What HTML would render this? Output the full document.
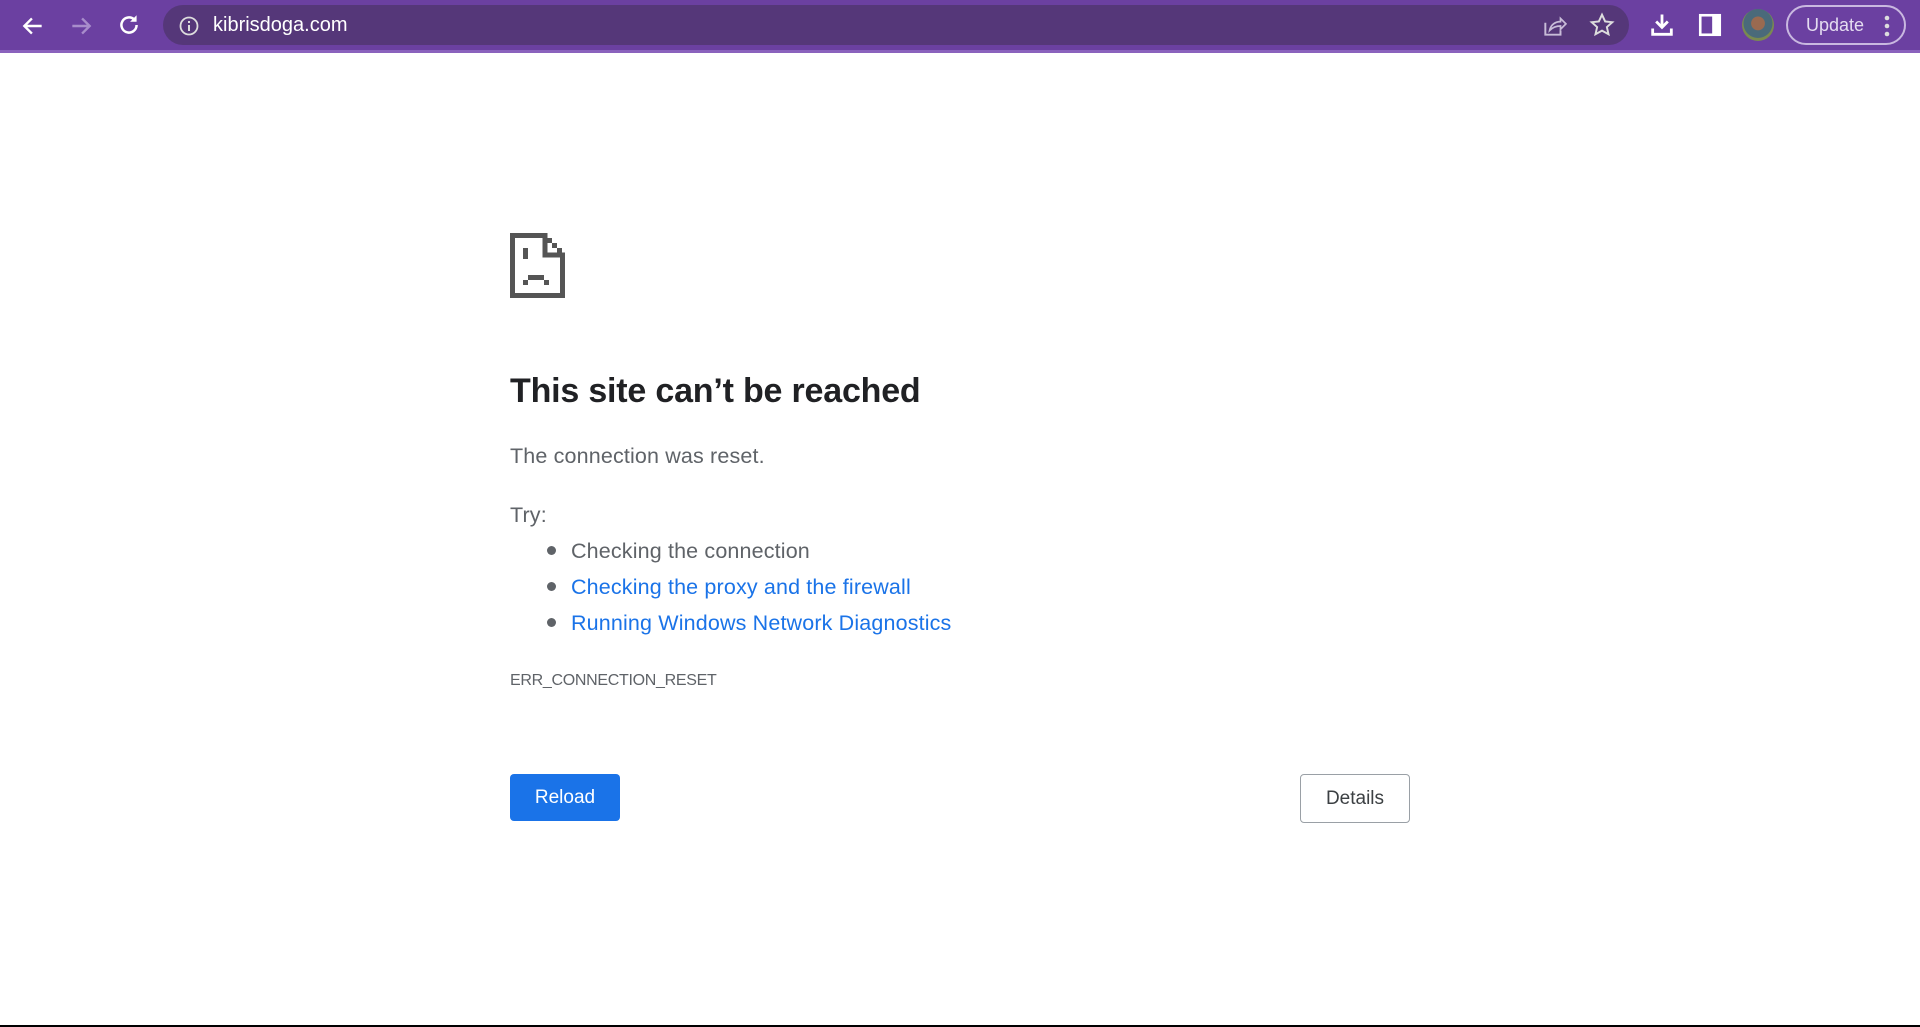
<!DOCTYPE html>
<html><head><meta charset="utf-8"><style>
*{margin:0;padding:0;box-sizing:border-box}
html,body{width:1920px;height:1027px;overflow:hidden;background:#fff;font-family:"Liberation Sans",sans-serif}
#bar{position:absolute;left:0;top:0;width:1920px;height:53px;background:#6b40a1;border-bottom:3px solid #8a62bd}
#omni{position:absolute;left:163px;top:5px;width:1466px;height:40px;border-radius:20px;background:#553779}
#url{position:absolute;left:213px;top:14px;color:#fff;font-size:20px}
.ic{position:absolute}
#upd{position:absolute;left:1786px;top:5px;width:120px;height:40px;border:2px solid #c9b8e0;border-radius:20px;color:#e4dcf0;font-size:18px;line-height:36px;padding-left:18px}
#av{position:absolute;left:1742px;top:9px;width:32px;height:32px;border-radius:50%;background:radial-gradient(circle at 50% 45%,#9a6a50 0 28%,#4a6a7a 30% 60%,#7a8a50 62%)}
h1{position:absolute;left:510px;top:372px;font-size:34px;font-weight:bold;color:#202124;white-space:nowrap;letter-spacing:-0.2px}
.t{position:absolute;color:#5f6368;font-size:21.5px;white-space:nowrap;letter-spacing:0.15px}
.l{color:#1a73e8}
.dot{position:absolute;left:547px;width:9px;height:9px;border-radius:50%;background:#5f6368}
#err{position:absolute;left:510px;top:672px;font-size:16px;color:#5f6368;letter-spacing:-0.3px}
#reload{position:absolute;left:510px;top:774px;width:110px;height:47px;background:#1a73e8;border-radius:4px;color:#fff;font-size:19px;text-align:center;line-height:47px}
#det{position:absolute;left:1300px;top:774px;width:110px;height:49px;border:1px solid #9aa0a6;border-radius:4px;color:#3c4043;font-size:19px;text-align:center;line-height:47px}
#bot{position:absolute;left:0;top:1025px;width:1920px;height:2px;background:#000}
</style></head><body>
<div id="bar"></div>
<svg class="ic" style="left:20px;top:13px" width="26" height="26" viewBox="0 0 24 24"><path d="M20 12H5M11 5l-7 7 7 7" stroke="#fff" stroke-width="2.2" fill="none"/></svg>
<svg class="ic" style="left:68px;top:13px" width="26" height="26" viewBox="0 0 24 24"><path d="M4 12h15M13 5l7 7-7 7" stroke="#a88dcb" stroke-width="2.2" fill="none"/></svg>
<svg class="ic" style="left:116px;top:12px" width="26" height="26" viewBox="0 0 24 24"><path d="M19 12a7 7 0 1 1-2.1-5" stroke="#fff" stroke-width="2.3" fill="none"/><path d="M19 3v6h-6z" fill="#fff"/></svg>
<div id="omni"></div>
<svg class="ic" style="left:178px;top:15px" width="22" height="22" viewBox="0 0 22 22"><circle cx="11" cy="11" r="8.5" stroke="#ddd" stroke-width="1.8" fill="none"/><path d="M11 10v6M11 6v2" stroke="#ddd" stroke-width="2"/></svg>
<div id="url">kibrisdoga.com</div>
<svg class="ic" style="left:1541px;top:13px" width="26" height="26" viewBox="0 0 24 24"><path d="M4 9v11h14v-4" stroke="#c8bcd8" stroke-width="1.8" fill="none"/><path d="M8 16c1-5 5-8 10-8V5l5 5-5 5v-3c-4 0-7 1-10 4z" stroke="#c8bcd8" stroke-width="1.6" fill="none"/></svg>
<svg class="ic" style="left:1589px;top:12px" width="26" height="26" viewBox="0 0 24 24"><path d="M12 2.5l2.9 6.2 6.6.7-5 4.5 1.5 6.6L12 17.2l-6 3.3 1.5-6.6-5-4.5 6.6-.7z" stroke="#ddd" stroke-width="1.8" fill="none"/></svg>
<svg class="ic" style="left:1648px;top:11px" width="28" height="28" viewBox="0 0 24 24"><path d="M12 3v11M7 9l5 5 5-5M4 15v5h16v-5" stroke="#fff" stroke-width="2.4" fill="none"/></svg>
<svg class="ic" style="left:1697px;top:12px" width="26" height="26" viewBox="0 0 24 24"><rect x="3" y="3" width="18" height="18" stroke="#fff" stroke-width="2.4" fill="none"/><rect x="14" y="3" width="7" height="18" fill="#fff"/></svg>
<div id="av"></div>
<div id="upd">Update</div>
<svg class="ic" style="left:1883px;top:14px" width="8" height="24" viewBox="0 0 8 24"><circle cx="4" cy="4" r="2.3" fill="#ddd"/><circle cx="4" cy="12" r="2.3" fill="#ddd"/><circle cx="4" cy="20" r="2.3" fill="#ddd"/></svg>

<svg class="ic" style="left:510px;top:233px" width="55" height="65" viewBox="0 0 55 65"><path d="M2.5 2.5H35V22H52.5V62.5H2.5Z M35 2.5V22H52.5" stroke="#555" stroke-width="5" fill="none"/><rect x="37" y="5" width="5" height="5" fill="#555"/><rect x="42" y="10" width="5" height="5" fill="#555"/><rect x="47" y="15" width="5" height="5" fill="#555"/><rect x="13" y="15" width="5" height="11" fill="#555"/><rect x="18" y="42" width="16" height="5" fill="#555"/><rect x="13" y="47" width="5" height="5" fill="#555"/><rect x="34" y="47" width="5" height="5" fill="#555"/></svg>

<h1>This site can’t be reached</h1>
<div class="t" style="left:510px;top:444px">The connection was reset.</div>
<div class="t" style="left:510px;top:503px">Try:</div>
<div class="dot" style="top:546px"></div>
<div class="t" style="left:571px;top:539px">Checking the connection</div>
<div class="dot" style="top:582px"></div>
<div class="t l" style="left:571px;top:575px">Checking the proxy and the firewall</div>
<div class="dot" style="top:618px"></div>
<div class="t l" style="left:571px;top:611px">Running Windows Network Diagnostics</div>
<div id="err">ERR_CONNECTION_RESET</div>
<div id="reload">Reload</div>
<div id="det">Details</div>
<div id="bot"></div>
</body></html>
